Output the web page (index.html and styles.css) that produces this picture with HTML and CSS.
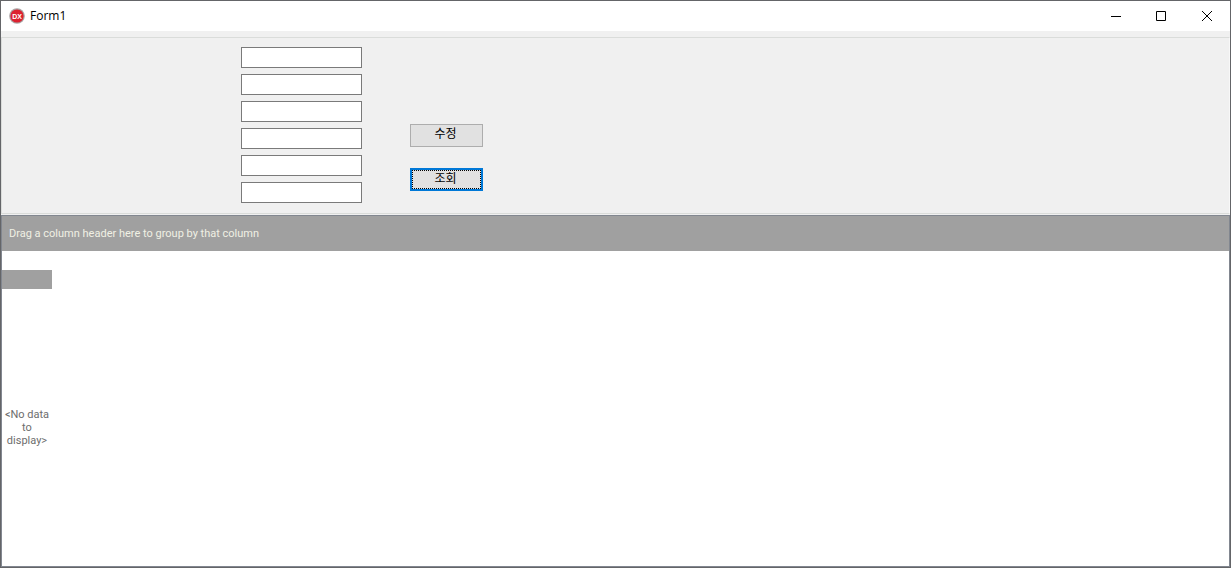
FILE: index.html
```html
<!DOCTYPE html>
<html lang="ko">
<head>
<meta charset="utf-8">
<title>Form1</title>
<link rel="stylesheet" href="styles.css">
</head>
<body>
<div class="window">
  <header class="titlebar">
    <svg class="app-icon" viewBox="0 0 16 16" aria-hidden="true">
      <circle cx="8" cy="8" r="7.8" fill="#a9a3a3"/>
      <circle cx="8" cy="8" r="6.6" fill="#dc2130"/>
      <text class="app-icon-label" x="8" y="10.5" text-anchor="middle">DX</text>
    </svg>
    <h1 class="title">Form1</h1>
    <div class="window-controls">
      <button class="control" type="button" aria-label="Minimize"><svg viewBox="0 0 10 10"><path d="M1 5.5h10"/></svg></button>
      <button class="control" type="button" aria-label="Maximize"><svg viewBox="0 0 10 10"><path d="M.5.5h9v9h-9z"/></svg></button>
      <button class="control" type="button" aria-label="Close"><svg viewBox="0 0 10 10"><path d="M0 0l10 10M10 0L0 10"/></svg></button>
    </div>
  </header>
  <form class="panel">
    <div class="fields">
      <input class="field" type="text" aria-label="Field 1">
      <input class="field" type="text" aria-label="Field 2">
      <input class="field" type="text" aria-label="Field 3">
      <input class="field" type="text" aria-label="Field 4">
      <input class="field" type="text" aria-label="Field 5">
      <input class="field" type="text" aria-label="Field 6">
    </div>
    <div class="actions">
      <button class="button" type="button">수정</button>
      <button class="button button-default" type="button"><span class="focus">조회</span></button>
    </div>
  </form>
  <main class="grid">
    <div class="group-box">Drag a column header here to group by that column</div>
    <div class="band">
      <div class="column-header"></div>
      <p class="empty">&lt;No data to display&gt;</p>
    </div>
  </main>
</div>
</body>
</html>
```
FILE: styles.css
```css
* {
  box-sizing: border-box;
}

body {
  margin: 0;
  font-family: Roboto, "Noto Sans CJK KR", sans-serif;
  font-size: 11px;
}

.window {
  display: flex;
  flex-direction: column;
  min-height: 100vh;
  border: 1px solid #646568;
  background: #f0f0f0;
}

.titlebar {
  display: flex;
  align-items: center;
  height: 30px;
  padding-left: 8px;
  background: #fff;
}

.app-icon {
  width: 16px;
  height: 16px;
}

.app-icon-label {
  fill: #fff;
  font-family: "Liberation Sans", sans-serif;
  font-size: 7px;
  font-weight: 700;
}

.title {
  margin: 0 auto 2px 5px;
  color: #000;
  font-family: "Open Sans", sans-serif;
  font-size: 12px;
  font-weight: 400;
}

.window-controls {
  display: flex;
  align-self: stretch;
}

.control {
  display: flex;
  align-items: center;
  justify-content: center;
  width: 46px;
  padding: 0;
  border: 0;
  background: none;
}

.control svg {
  width: 10px;
  height: 10px;
  overflow: visible;
  fill: none;
  stroke: #000;
}

.panel {
  display: flex;
  gap: 48px;
  margin-top: 6px;
  padding: 9px 0 10px 239px;
  border: 1px solid #dadcda;
  border-right-color: #f8f8f8;
}

.fields {
  display: flex;
  flex-direction: column;
  gap: 6px;
}

.field {
  width: 121px;
  height: 21px;
  padding: 2px 4px;
  border: 1px solid #7a7a7a;
  background: #fff;
  font: inherit;
}

.actions {
  display: flex;
  flex-direction: column;
  gap: 21px;
  padding-top: 77px;
}

.button {
  width: 73px;
  height: 23px;
  padding: 0 2px 5px 0;
  border: 1px solid #adadad;
  background: #e1e1e1;
  color: #000;
  font-family: "Noto Sans CJK KR", sans-serif;
  font-size: 12px;
  line-height: 16px;
}

.button-default {
  padding: 0;
  border: 2px solid #0078d7;
}

.focus {
  display: block;
  height: 19px;
  padding-right: 2px;
  border: 1px dotted #000;
  line-height: 13px;
}

.grid {
  display: flex;
  flex: 1;
  flex-direction: column;
  margin-top: 1px;
  border: 1px solid #828790;
  background: #fff;
}

.group-box {
  height: 35px;
  padding: 0 7px;
  background: #a0a0a0;
  color: #f0f0e4;
  line-height: 35px;
}

.band {
  display: flex;
  flex: 1;
  flex-direction: column;
  width: 50px;
  padding-top: 19px;
}

.column-header {
  height: 19px;
  background: #a0a0a0;
}

.empty {
  margin: auto 0;
  color: #6d6d6d;
  line-height: 13px;
  text-align: center;
}
```
